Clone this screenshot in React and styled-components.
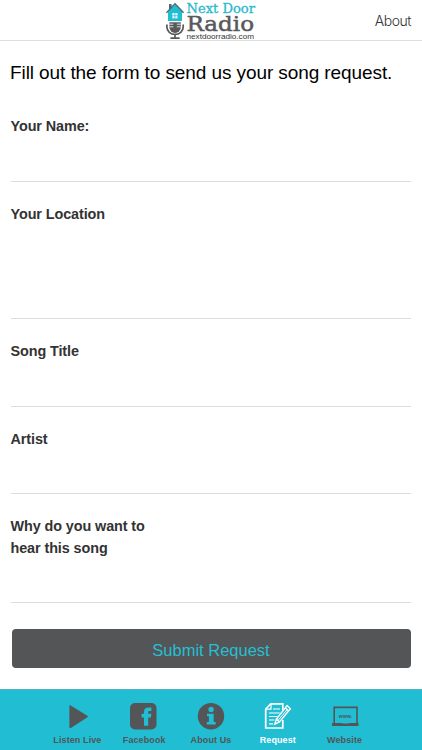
import React from "react";
import styled, { createGlobalStyle } from "styled-components";

const GlobalStyle = createGlobalStyle`
  * { box-sizing: border-box; }
  body {
    margin: 0;
    background: #fff;
    font-family: "Liberation Sans", Arial, sans-serif;
  }
`;

const Screen = styled.div`
  display: flex;
  flex-direction: column;
  width: 422px;
  height: 750px;
  overflow: hidden;
  background: #fff;
`;

const Header = styled.header`
  display: grid;
  grid-template-columns: 1fr 90px 1fr;
  align-items: center;
  height: 41px;
  padding: 0 11px;
  border-bottom: 1px solid #dedede;
`;

const Logo = styled.svg`
  grid-column: 2;
  display: block;
  width: 90px;
  height: 40px;
`;

const HeaderLink = styled.a`
  justify-self: end;
  padding-top: 1px;
  font-family: Inter, "Liberation Sans", sans-serif;
  font-weight: 300;
  font-size: 14px;
  letter-spacing: -0.45px;
  line-height: 20px;
  color: #333;
`;

const Form = styled.form`
  display: flex;
  flex-direction: column;
  flex: 1;
  padding: 0 11px;
`;

const Intro = styled.p`
  height: 53px;
  margin: 0 0 0 -1px;
  padding-top: 20px;
  font-size: 19px;
  line-height: 24px;
  letter-spacing: -0.09px;
  white-space: nowrap;
  color: #000;
`;

const Field = styled.label`
  flex: none;
  height: ${(p) => p.$height}px;
  padding-top: 22px;
  border-bottom: 1px solid #dcdcdc;
`;

const FieldLabel = styled.span`
  display: block;
  width: 150px;
  margin-left: -0.5px;
  font-size: 14.4px;
  font-weight: 700;
  line-height: 21.5px;
  letter-spacing: -0.09px;
  color: #333;
`;

const SubmitButton = styled.button`
  flex: none;
  height: 39px;
  margin: 26px 0.5px 0;
  padding: 3px 0 0;
  border: 0;
  border-radius: 4px;
  background: #545556;
  color: #26bfd3;
  font-family: inherit;
  font-size: 16.5px;
`;

const TabBar = styled.nav`
  display: flex;
  justify-content: center;
  height: 61px;
  padding-top: 12px;
  border-top: 1px solid #4db5c3;
  background: #20bdd3;
`;

const Tab = styled.a`
  display: flex;
  flex-direction: column;
  align-items: center;
  gap: 2px;
  width: 66.8px;
  color: ${(p) => (p.$active ? "#fff" : "#545556")};
  font-size: 9px;
  font-weight: 700;
  line-height: 12px;
  letter-spacing: 0.1px;
  white-space: nowrap;
`;

const TabIcon = styled.svg`
  display: block;
  width: 30px;
  height: 30px;
  overflow: visible;
`;

const icons = {
  play: <path d="M8.2 3.2 25.4 13.8a.8.8 0 0 1 0 1.4L8.8 26a.9.9 0 0 1-1.4-.8V3.8a.6.6 0 0 1 .8-.6Z" fill="currentColor" />,
  facebook: (
    <>
      <rect x="1" y="1" width="26.5" height="26.5" rx="5" fill="currentColor" />
      <path d="M15 23.8V15.4H12.6V11.7H15V10c0-3.1 1.6-4.5 4.6-4.5h2.8v3.6h-1.7c-1.1 0-1.5.4-1.5 1.5v1.1h3.2l-.5 3.7h-2.7v8.4Z" fill="#20bdd3" />
    </>
  ),
  info: (
    <>
      <circle cx="15" cy="14.2" r="13.2" fill="currentColor" />
      <circle cx="15.1" cy="7.5" r="2.7" fill="#20bdd3" />
      <path d="M11 11.8h6.7v8.2h2v2.5H10.8V20h2.1v-5.7H11Z" fill="#20bdd3" />
    </>
  ),
  request: (
    <g fill="none" stroke="currentColor" strokeWidth="1.4">
      <path d="M19.8 8V1.8H7.8L2.7 7v19h17.1v-8" strokeWidth="1.7" />
      <path d="M8 2v5.2H3M10 7h7M6 11h10.7M6 14.5h8.2M6 18h5.4M6 21.8h4.1" strokeWidth="1.2" />
      <path d="m13.4 17-1.6 5.2 4.7-2.2L27.4 6.7l-3.3-3.1Zm.2.2 2.9 2.7M22.3 5.8l3.1 3" />
      <path d="m15.1 18.4 9.2-11" strokeWidth="1" />
    </g>
  ),
  website: (
    <>
      <path d="M4.2 21V5.4h22.8V21" fill="none" stroke="currentColor" strokeWidth="1.6" />
      <path d="M2 20.9h9.5l1 .7h6l1-.7h9v3.1H2Z" fill="currentColor" />
      <text x="8.8" y="15.9" fontSize="4.8" fontWeight="700" textLength="13.6" lengthAdjust="spacingAndGlyphs" fill="currentColor">www.</text>
    </>
  ),
};

const fields = [
  { label: "Your Name:", height: 87.5 },
  { label: "Your Location", height: 137.5 },
  { label: "Song Title", height: 87.5 },
  { label: "Artist", height: 87.5 },
  { label: "Why do you want to hear this song", height: 109 },
];

const tabs = [
  { label: "Listen Live", icon: "play" },
  { label: "Facebook", icon: "facebook" },
  { label: "About Us", icon: "info" },
  { label: "Request", icon: "request", active: true },
  { label: "Website", icon: "website" },
];

function StationLogo() {
  return (
    <Logo viewBox="166 0 90 40">
      {/* house */}
      <path d="M169 4h2.6v6H169Z" fill="#4a6c72" />
      <path d="M168 11.5 175 4.5l7 7V21h-14Z" fill="#20bdd3" />
      <path d="m166.4 12.8 8.6-9 8.6 9" fill="none" stroke="#456f78" strokeWidth="1.5" />
      <path d="M172.3 13h5.2v5.4h-5.2Z" fill="#e9fafc" />
      <path d="M174.9 13v5.4m-2.6-2.7h5.2" stroke="#20bdd3" strokeWidth=".7" />
      {/* microphone */}
      <path d="M169.4 22.2h11.4v5a5.7 5.7 0 0 1-11.4 0Z" fill="#58595b" />
      <path d="M169.4 24.2h4m3.4 0h4m-11.4 2.6h4m3.4 0h4" stroke="#fff" strokeWidth=".8" />
      <path d="M166.9 24.5v2.6a8.1 7.3 0 0 0 16.3 0v-2.6M175 34.4v3m-4.6.8h9.2" fill="none" stroke="#58595b" strokeWidth="1.7" />
      <text x="186.5" y="13" fontFamily="DejaVu Serif, serif" fontSize="12.6" textLength="68.5" lengthAdjust="spacingAndGlyphs" fill="#2bb9cc" stroke="#2bb9cc" strokeWidth=".3">Next Door</text>
      <text x="186.5" y="31.2" fontFamily="DejaVu Serif, serif" fontSize="21" textLength="67.5" lengthAdjust="spacingAndGlyphs" fill="#58595b" stroke="#58595b" strokeWidth=".5">Radio</text>
      <text x="186.5" y="38.5" fontFamily="Liberation Sans, sans-serif" fontSize="7.8" textLength="67.5" lengthAdjust="spacingAndGlyphs" fill="#333">nextdoorradio.com</text>
    </Logo>
  );
}

export default function App() {
  return (
    <>
      <GlobalStyle />
      <Screen>
        <Header>
          <StationLogo />
          <HeaderLink>About</HeaderLink>
        </Header>
        <Form>
          <Intro>Fill out the form to send us your song request.</Intro>
          {fields.map((f) => (
            <Field key={f.label} $height={f.height}>
              <FieldLabel>{f.label}</FieldLabel>
            </Field>
          ))}
          <SubmitButton type="button">Submit Request</SubmitButton>
        </Form>
        <TabBar>
          {tabs.map((t) => (
            <Tab key={t.label} $active={t.active}>
              <TabIcon viewBox="0 0 30 30">{icons[t.icon]}</TabIcon>
              {t.label}
            </Tab>
          ))}
        </TabBar>
      </Screen>
    </>
  );
}
